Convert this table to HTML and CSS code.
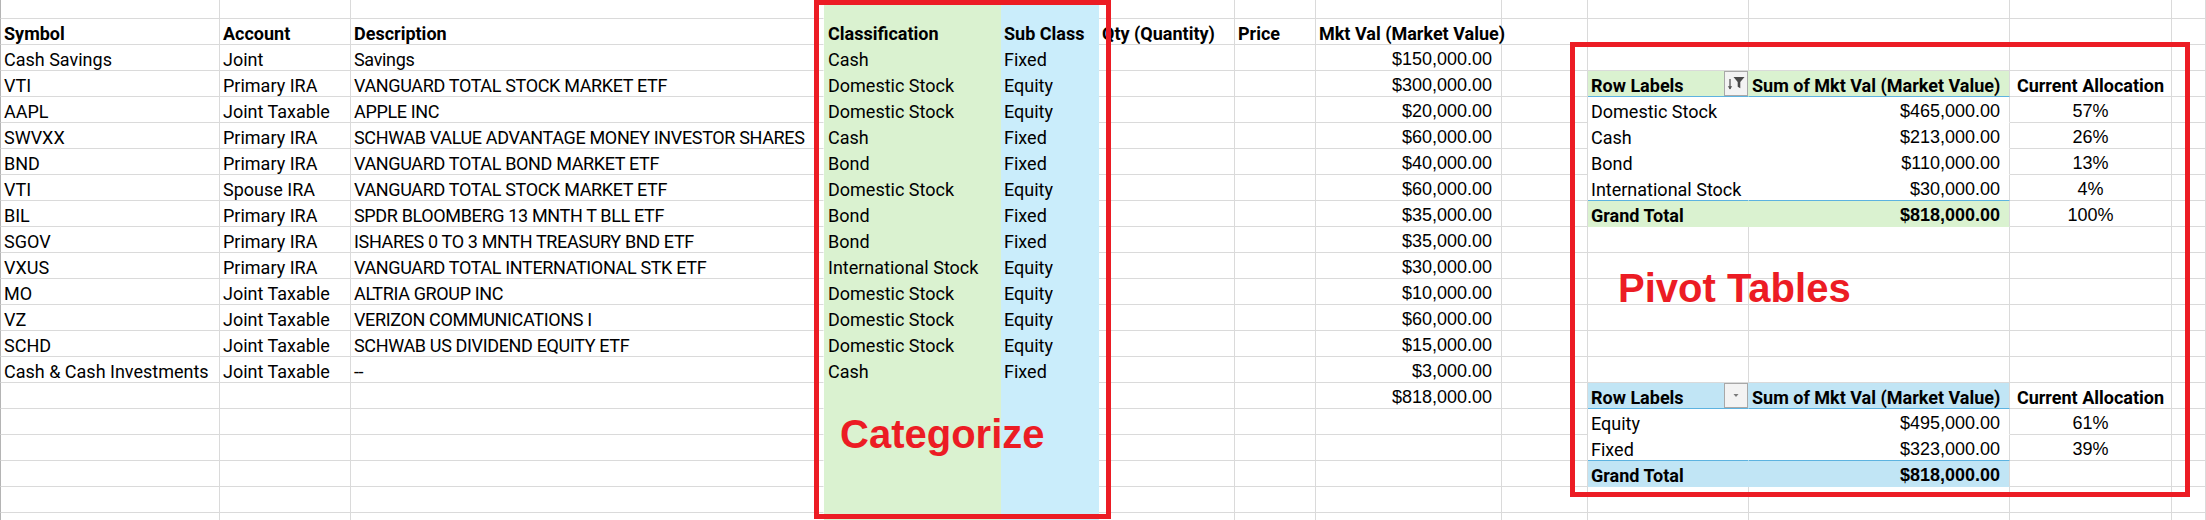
FILE: index.html
```html
<!DOCTYPE html>
<html>
<head>
<meta charset="utf-8">
<title>Portfolio</title>
<link rel="stylesheet" href="styles.css">
</head>
<body>
<div class="sheet">
  <div class="row first"><div class="c"></div><div class="c"></div><div class="c"></div><div class="c"></div><div class="c"></div><div class="c"></div><div class="c"></div><div class="c"></div><div class="c"></div><div class="c"></div><div class="c"></div><div class="c"></div><div class="c"></div></div>
  <div class="row"><div class="c b">Symbol</div><div class="c b">Account</div><div class="c b">Description</div><div class="c b">Classification</div><div class="c b">Sub Class</div><div class="c b">Qty (Quantity)</div><div class="c b">Price</div><div class="c b">Mkt Val (Market Value)</div><div class="c"></div><div class="c"></div><div class="c"></div><div class="c"></div><div class="c"></div></div>
  <div class="row"><div class="c">Cash Savings</div><div class="c">Joint</div><div class="c">Savings</div><div class="c">Cash</div><div class="c">Fixed</div><div class="c"></div><div class="c"></div><div class="c num">$150,000.00</div><div class="c"></div><div class="c"></div><div class="c"></div><div class="c"></div><div class="c"></div></div>
  <div class="row"><div class="c">VTI</div><div class="c">Primary IRA</div><div class="c">VANGUARD TOTAL STOCK MARKET ETF</div><div class="c">Domestic Stock</div><div class="c">Equity</div><div class="c"></div><div class="c"></div><div class="c num">$300,000.00</div><div class="c"></div><div class="c b pj pg pline plabel">Row Labels<span class="pbtn"><svg width="22" height="23" viewBox="0 0 22 23"><path d="M5 7v10" stroke="#555" stroke-width="1.3"/><path d="M2.8 14.2L5 17.4l2.2-3.2z" fill="#555"/><path d="M8.5 5h11l-4.2 5v6.2l-2.6-1.5V10z" fill="#4a4a4a"/></svg></span></div><div class="c b pk pg pline">Sum of Mkt Val (Market Value)</div><div class="c b ctr">Current Allocation</div><div class="c"></div></div>
  <div class="row"><div class="c">AAPL</div><div class="c">Joint Taxable</div><div class="c">APPLE INC</div><div class="c">Domestic Stock</div><div class="c">Equity</div><div class="c"></div><div class="c"></div><div class="c num">$20,000.00</div><div class="c"></div><div class="c pj">Domestic Stock</div><div class="c pk num">$465,000.00</div><div class="c pct">57%</div><div class="c"></div></div>
  <div class="row"><div class="c">SWVXX</div><div class="c">Primary IRA</div><div class="c">SCHWAB VALUE ADVANTAGE MONEY INVESTOR SHARES</div><div class="c">Cash</div><div class="c">Fixed</div><div class="c"></div><div class="c"></div><div class="c num">$60,000.00</div><div class="c"></div><div class="c pj">Cash</div><div class="c pk num">$213,000.00</div><div class="c pct">26%</div><div class="c"></div></div>
  <div class="row"><div class="c">BND</div><div class="c">Primary IRA</div><div class="c">VANGUARD TOTAL BOND MARKET ETF</div><div class="c">Bond</div><div class="c">Fixed</div><div class="c"></div><div class="c"></div><div class="c num">$40,000.00</div><div class="c"></div><div class="c pj">Bond</div><div class="c pk num">$110,000.00</div><div class="c pct">13%</div><div class="c"></div></div>
  <div class="row"><div class="c">VTI</div><div class="c">Spouse IRA</div><div class="c">VANGUARD TOTAL STOCK MARKET ETF</div><div class="c">Domestic Stock</div><div class="c">Equity</div><div class="c"></div><div class="c"></div><div class="c num">$60,000.00</div><div class="c"></div><div class="c pj pline">International Stock</div><div class="c pk num pline">$30,000.00</div><div class="c pct">4%</div><div class="c"></div></div>
  <div class="row"><div class="c">BIL</div><div class="c">Primary IRA</div><div class="c">SPDR BLOOMBERG 13 MNTH T BLL ETF</div><div class="c">Bond</div><div class="c">Fixed</div><div class="c"></div><div class="c"></div><div class="c num">$35,000.00</div><div class="c"></div><div class="c b pj pg">Grand Total</div><div class="c b pk pg num">$818,000.00</div><div class="c pct">100%</div><div class="c"></div></div>
  <div class="row"><div class="c">SGOV</div><div class="c">Primary IRA</div><div class="c">ISHARES 0 TO 3 MNTH TREASURY BND ETF</div><div class="c">Bond</div><div class="c">Fixed</div><div class="c"></div><div class="c"></div><div class="c num">$35,000.00</div><div class="c"></div><div class="c"></div><div class="c"></div><div class="c"></div><div class="c"></div></div>
  <div class="row"><div class="c">VXUS</div><div class="c">Primary IRA</div><div class="c">VANGUARD TOTAL INTERNATIONAL STK ETF</div><div class="c">International Stock</div><div class="c">Equity</div><div class="c"></div><div class="c"></div><div class="c num">$30,000.00</div><div class="c"></div><div class="c"></div><div class="c"></div><div class="c"></div><div class="c"></div></div>
  <div class="row"><div class="c">MO</div><div class="c">Joint Taxable</div><div class="c">ALTRIA GROUP INC</div><div class="c">Domestic Stock</div><div class="c">Equity</div><div class="c"></div><div class="c"></div><div class="c num">$10,000.00</div><div class="c"></div><div class="c"></div><div class="c"></div><div class="c"></div><div class="c"></div></div>
  <div class="row"><div class="c">VZ</div><div class="c">Joint Taxable</div><div class="c">VERIZON COMMUNICATIONS I</div><div class="c">Domestic Stock</div><div class="c">Equity</div><div class="c"></div><div class="c"></div><div class="c num">$60,000.00</div><div class="c"></div><div class="c"></div><div class="c"></div><div class="c"></div><div class="c"></div></div>
  <div class="row"><div class="c">SCHD</div><div class="c">Joint Taxable</div><div class="c">SCHWAB US DIVIDEND EQUITY ETF</div><div class="c">Domestic Stock</div><div class="c">Equity</div><div class="c"></div><div class="c"></div><div class="c num">$15,000.00</div><div class="c"></div><div class="c"></div><div class="c"></div><div class="c"></div><div class="c"></div></div>
  <div class="row"><div class="c">Cash &amp; Cash Investments</div><div class="c">Joint Taxable</div><div class="c">--</div><div class="c">Cash</div><div class="c">Fixed</div><div class="c"></div><div class="c"></div><div class="c num">$3,000.00</div><div class="c"></div><div class="c"></div><div class="c"></div><div class="c"></div><div class="c"></div></div>
  <div class="row"><div class="c"></div><div class="c"></div><div class="c"></div><div class="c"></div><div class="c"></div><div class="c"></div><div class="c"></div><div class="c num">$818,000.00</div><div class="c"></div><div class="c b pj pb pline plabel">Row Labels<span class="pbtn"><svg width="22" height="23" viewBox="0 0 22 23"><path d="M8.5 10h5l-2.5 3z" fill="#7a7a7a"/></svg></span></div><div class="c b pk pb pline">Sum of Mkt Val (Market Value)</div><div class="c b ctr">Current Allocation</div><div class="c"></div></div>
  <div class="row"><div class="c"></div><div class="c"></div><div class="c"></div><div class="c"></div><div class="c"></div><div class="c"></div><div class="c"></div><div class="c"></div><div class="c"></div><div class="c pj">Equity</div><div class="c pk num">$495,000.00</div><div class="c pct">61%</div><div class="c"></div></div>
  <div class="row"><div class="c"></div><div class="c"></div><div class="c"></div><div class="c"></div><div class="c"></div><div class="c"></div><div class="c"></div><div class="c"></div><div class="c"></div><div class="c pj pline">Fixed</div><div class="c pk num pline">$323,000.00</div><div class="c pct">39%</div><div class="c"></div></div>
  <div class="row"><div class="c"></div><div class="c"></div><div class="c"></div><div class="c"></div><div class="c"></div><div class="c"></div><div class="c"></div><div class="c"></div><div class="c"></div><div class="c b pj pb">Grand Total</div><div class="c b pk pb num">$818,000.00</div><div class="c"></div><div class="c"></div></div>
  <div class="row"><div class="c"></div><div class="c"></div><div class="c"></div><div class="c"></div><div class="c"></div><div class="c"></div><div class="c"></div><div class="c"></div><div class="c"></div><div class="c"></div><div class="c"></div><div class="c"></div><div class="c"></div></div>
  <div class="row"><div class="c"></div><div class="c"></div><div class="c"></div><div class="c"></div><div class="c"></div><div class="c"></div><div class="c"></div><div class="c"></div><div class="c"></div><div class="c"></div><div class="c"></div><div class="c"></div><div class="c"></div></div>
</div>
<div class="frame frame-cat"></div>
<div class="frame frame-pivot"></div>
<div class="note note-cat">Categorize</div>
<div class="note note-pivot">Pivot Tables</div>
</body>
</html>
```
FILE: styles.css
```css
* { box-sizing: border-box; margin: 0; padding: 0; }
html, body { width: 2206px; height: 520px; overflow: hidden; background: #fff; }
body { position: relative; font-family: Roboto, "Liberation Sans", sans-serif; font-size: 18px; color: #000; }

.sheet { display: flex; flex-direction: column; }
.row {
  display: grid;
  grid-template-columns: 220px 131px 473px 177px 98px 136px 81px 186px 86px 161px 261px 162px 34px;
  height: 26px;
}
.row.first { height: 19px; }

.c {
  display: flex;
  align-items: flex-end;
  min-width: 0;
  padding: 0 3px;
  line-height: 21px;
  white-space: nowrap;
  border-right: 1px solid #dadada;
  border-bottom: 1px solid #dadada;
}
.row > .c:first-child { border-left: 1px solid #b4b4b4; }
.row > .c:nth-child(3) { overflow: hidden; border-right-color: #fff; letter-spacing: -0.35px; }
.row > .c.b:nth-child(3) { letter-spacing: 0; }
.row > .c:nth-child(4) { background: #daf2d0; border-color: #daf2d0; padding-left: 4px; }
.row > .c:nth-child(5) { background: #caedfb; border-color: #caedfb; }

.b { font-weight: 700; }
.num { font-family: "Liberation Sans", Arial, sans-serif; justify-content: flex-end; padding-right: 9px; }
.pct { font-family: "Liberation Sans", Arial, sans-serif; justify-content: center; }
.ctr { justify-content: center; }

/* pivot tables */
.pj, .pk { background: #fff; border-bottom-color: #fff; }
.pj { border-right-color: #fff; }
.pg { background: #daf2d0; border-bottom-color: #daf2d0; border-right-color: #daf2d0; }
.pb { background: #c1e5f5; border-bottom-color: #c1e5f5; border-right-color: #c1e5f5; }
.pk.pg, .pk.pb { border-right-color: #dadada; }
.pline { border-bottom-color: #5db3e0; }
.plabel { justify-content: space-between; padding-right: 0; }
.pbtn {
  display: flex;
  align-items: center;
  justify-content: center;
  width: 24px;
  height: 25px;
  background: #f3f3f3;
  border: 1px solid #a8a8a8;
}

/* annotations */
.frame { position: absolute; border: 5px solid #ec1c24; }
.frame-cat { left: 814px; top: 0; width: 297px; height: 519px; }
.frame-pivot { left: 1570px; top: 42px; width: 620px; height: 455px; }
.note {
  position: absolute;
  color: #ec1c24;
  font-family: "Liberation Sans", Arial, sans-serif;
  font-weight: 700;
  font-size: 40px;
  line-height: 40px;
  white-space: nowrap;
}
.note-cat { left: 840px; top: 414px; }
.note-pivot { left: 1618px; top: 268px; }
```
